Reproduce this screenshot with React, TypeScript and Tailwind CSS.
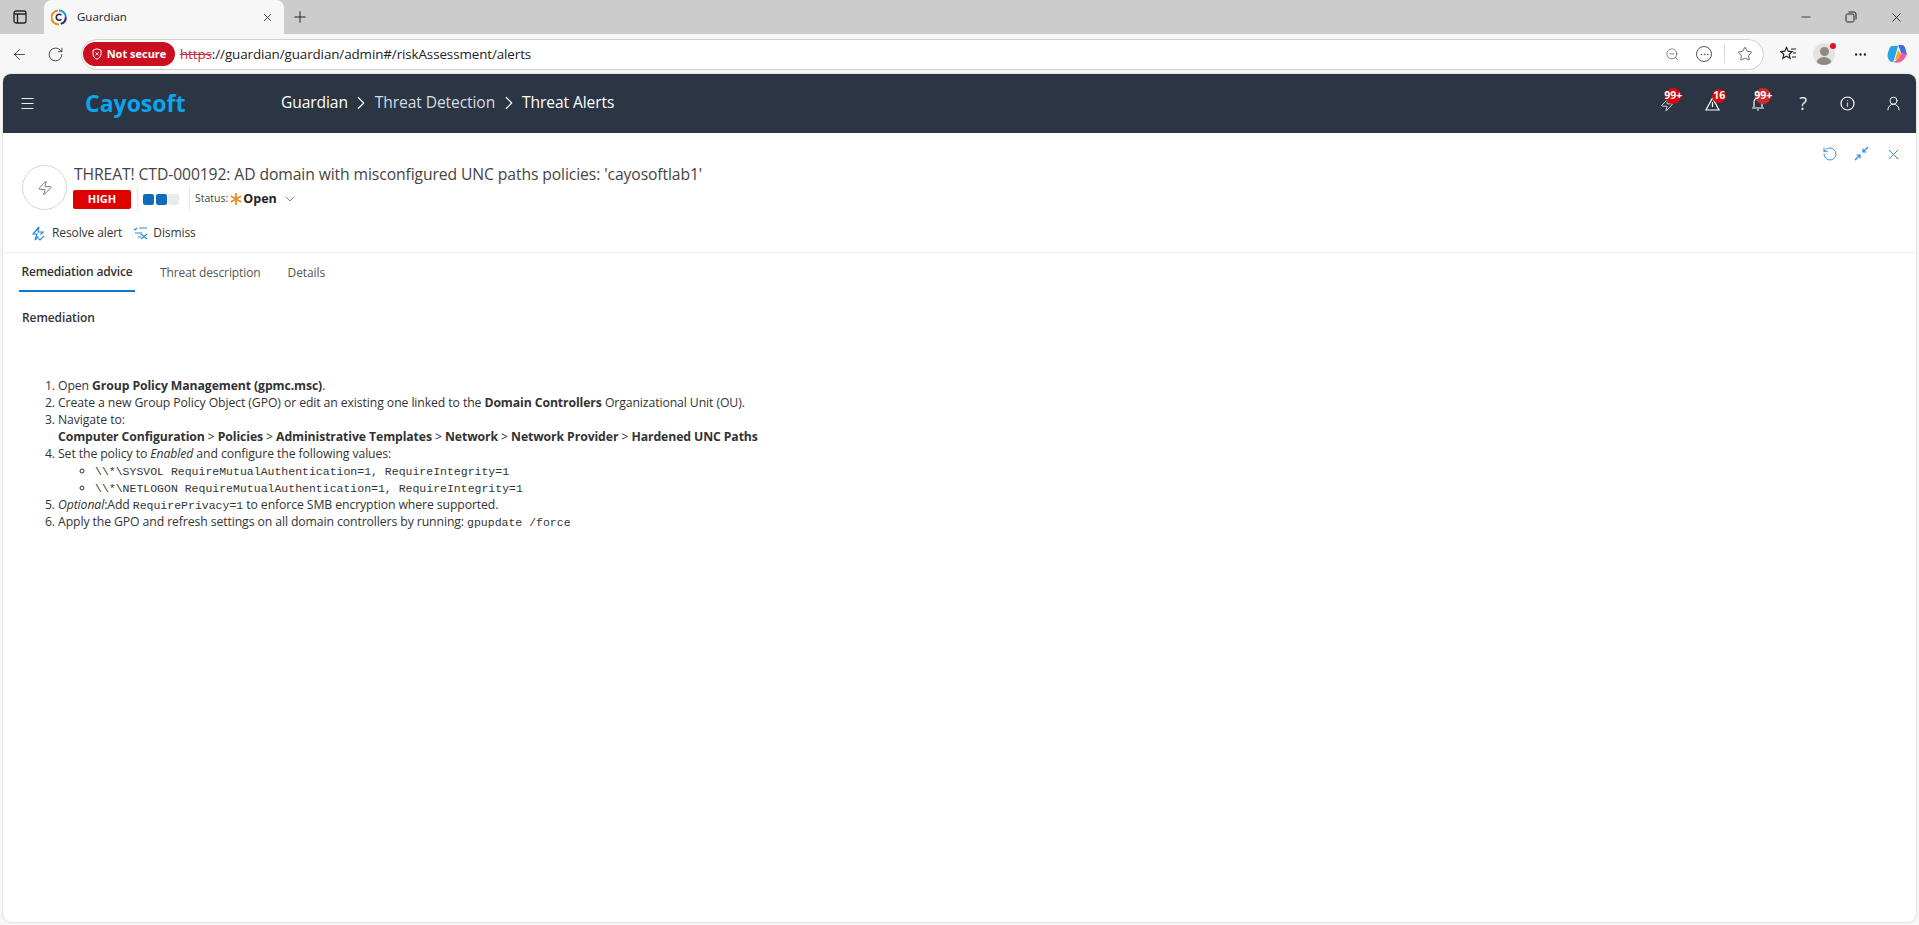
import React from "react";
import { ArrowLeft, ChevronDown, ChevronRight, Ellipsis, Menu, Minus, Plus, RotateCw, Star, UserRound, X, Zap, ZoomOut } from "lucide-react";

const badgeBase = "absolute flex items-center justify-center rounded-full text-[10.500px] font-bold text-white";

const BrowserBar = () => (
  <div className="shrink-0">
    <div className="flex h-[34px] items-stretch bg-[#cccccc]">
      <div className="flex w-[44px] items-center justify-center pr-[4px]">
        <svg width="14" height="14" viewBox="0 0 14 14" fill="none" stroke="#222" strokeWidth="1.3">
          <rect x="1" y="1" width="12" height="12" rx="2" />
          <path d="M1 4h12M4.500 4v9" />
        </svg>
      </div>
      <div className="flex w-[240px] items-center rounded-t-[8px] bg-[#f7f7f7] pl-[7px] pr-[10px]">
        <svg width="16" height="17" viewBox="0 0 16 17" fill="none">
          <path d="M8 1.500a6.800 6.800 0 0 1 6.800 6.800" stroke="#1d9bd8" strokeWidth="2" />
          <path d="M14.800 8.300a6.800 6.800 0 0 1-5 6.600" stroke="#232a55" strokeWidth="2" />
          <path d="M8 15.500a7 7 0 0 1-1-14" stroke="#ef8a1d" strokeWidth="2" />
          <path d="M10.400 6.200a3 3 0 1 0 0 4.200" stroke="#232a55" strokeWidth="1.600" />
        </svg>
        <span className="ml-[10px] flex-1 font-['Open_Sans',sans-serif] text-[11.500px] text-[#222]">Guardian</span>
        <X size={13} strokeWidth={1.5} className="text-[#222]" />
      </div>
      <div className="flex w-[32px] items-center justify-center">
        <Plus size={18} strokeWidth={1.3} className="text-[#222]" />
      </div>
      <div className="flex-1" />
      <div className="flex items-center gap-[32px] pr-[15px] text-[#222]">
        <Minus size={14} strokeWidth={1.4} />
        <svg width="12" height="12" viewBox="0 0 12 12" fill="none" stroke="#222" strokeWidth="1">
          <rect x="1" y="3" width="8" height="8" rx="1.500" />
          <path d="M3.500 1h5.500a2 2 0 0 1 2 2v5.500" />
        </svg>
        <X size={15} strokeWidth={1.4} />
      </div>
    </div>
    <div className="flex h-[40px] items-center bg-[#f7f7f7]">
      <div className="flex w-[81px] items-center pl-[11px] text-[#333]">
        <ArrowLeft size={17} strokeWidth={1.2} />
        <RotateCw size={17} strokeWidth={1.2} className="ml-[19px]" />
      </div>
      <div className="flex h-[31px] w-[1683px] items-center rounded-full border border-[#cfcfcf] bg-white pl-[1px] pr-[10px]">
        <div className="flex h-[24px] w-[92px] items-center justify-center gap-[5px] rounded-full bg-[#c90f20] font-['Open_Sans',sans-serif] text-[11px] font-bold text-white">
          <svg width="10" height="12" viewBox="0 0 10 12" fill="none" stroke="#fff" strokeWidth="1">
            <path d="M5 .8 9 2.200v3.600c0 2.600-1.700 4.300-4 5.400C2.700 10.100 1 8.400 1 5.800V2.200Z" />
            <path d="m3.500 4.300 3 3m0-3-3 3" />
          </svg>
          Not secure
        </div>
        <div className="ml-[5px] flex-1 font-['Open_Sans',sans-serif] text-[13.400px] tracking-[-0.1px] text-[#222]">
          <span className="text-[#c5283d] line-through">https</span>://guardian/guardian/admin#/riskAssessment/alerts
        </div>
        <ZoomOut size={15} strokeWidth={1.1} className="text-[#555]" />
        <div className="ml-[16px] flex h-[16px] w-[16px] items-center justify-center rounded-full border border-[#555] text-[#555]">
          <Ellipsis size={11} strokeWidth={1.5} />
        </div>
        <div className="ml-[12px] h-[18px] w-px bg-[#d8d8d8]" />
        <Star size={16} strokeWidth={1.2} className="ml-[12px] text-[#444]" />
      </div>
      <svg width="17" height="16" viewBox="0 0 17 16" fill="none" stroke="#222" strokeWidth="1.2" className="ml-[16px]">
        <path d="m6.500 1.500 1.700 3.700 4 .4-3 2.700.9 4-3.600-2.100-3.600 2.100.9-4-3-2.700 4-.4Z" />
        <path d="M11 3h5M13 7h3M12 11h4" />
      </svg>
      <div className="relative ml-[16px] h-[22px] w-[22px] overflow-hidden rounded-full bg-[#e4e3e1]">
        <div className="mx-auto mt-[4px] h-[9px] w-[9px] rounded-full bg-[#8d8a86]" />
        <div className="mx-auto mt-[1px] h-[10px] w-[16px] rounded-t-full bg-[#8d8a86]" />
      </div>
      <div className="relative -top-[8px] -ml-[5px] h-[6px] w-[6px] rounded-full bg-[#e81123]" />
      <Ellipsis size={15} strokeWidth={1.8} className="ml-[17px] text-[#222]" />
      <svg width="22" height="22" viewBox="0 0 22 22" fill="none" className="ml-[18px]">
        <path d="M6 3h6L8 17c-.5 1.800-2 2.500-3.500 1.500C2 17 .5 12 2.500 8 3.300 6 4 3 6 3Z" fill="#27a4e8" />
        <path d="M12 2h4c2 0 3 2 3.500 4L21 12l-6-2-2-6Z" fill="#3f6ee6" />
        <path d="M7 19c3 1 7 1 9-1 2-1.500 4-4 5-7l-5-1-3 3c-1 2-2 5-6 6Z" fill="#ec5aa0" />
        <path d="m9 17 3-10 3 4-2 5Z" fill="#f5a623" />
      </svg>
    </div>
  </div>
);

const AppHeader = () => (
  <header className="flex h-[59px] shrink-0 items-center rounded-t-[8px] bg-[#2b3544] pb-[1px] font-['Open_Sans',sans-serif] text-white">
    <Menu size={17} strokeWidth={1.3} className="ml-[16px]" />
    <span className="ml-[49px] w-[196px] text-[23px] font-bold leading-none text-[#0ba5ec]">Cayosoft</span>
    <nav className="flex items-center text-[15.600px] tracking-[-0.1px]">
      <span>Guardian</span>
      <ChevronRight size={22} strokeWidth={1.2} className="mx-[2.500px]" />
      <span className="text-[#d5dbe3]">Threat Detection</span>
      <ChevronRight size={22} strokeWidth={1.2} className="mx-[2.500px]" />
      <span>Threat Alerts</span>
    </nav>
    <div className="flex-1" />
    <div className="flex items-center pr-[14px]">
      <div className="relative mr-[29px] h-[16px] w-[16px]">
        <Zap size={14} strokeWidth={1.3} className="mt-[3px]" />
        <span className={`${badgeBase} -top-[7px] left-[5px] h-[16px] w-[16px] bg-[#d90a0a]`}>99+</span>
      </div>
      <div className="relative mr-[30px] h-[16px] w-[16px]">
        <svg width="15" height="14" viewBox="0 0 15 14" fill="none" stroke="#fff" strokeWidth="1.2" className="mt-[2px]">
          <path d="M7.500 1 14 13H1ZM7.500 5v5" />
        </svg>
        <span className={`${badgeBase} -top-[6px] left-[7px] h-[14px] w-[14px] bg-[#d90a0a]`}>16</span>
      </div>
      <div className="relative mr-[32px] h-[16px] w-[16px]">
        <svg width="14" height="15" viewBox="0 0 14 15" fill="none" stroke="#fff" strokeWidth="1.2" className="mt-[1px]">
          <path d="M3 11V6a4 4 0 0 1 8 0v5M1 12h12M6 14h2" />
        </svg>
        <span className={`${badgeBase} -top-[7px] left-[4px] h-[16px] w-[16px] bg-[#cc2b2b]`}>99+</span>
      </div>
      <span className="text-[18px] leading-none text-[#e8eef5]">?</span>
      <svg width="15" height="15" viewBox="0 0 15 15" fill="none" stroke="#fff" strokeWidth="1.2" className="ml-[33px]">
        <circle cx="7.500" cy="7.500" r="6.500" />
        <path d="M7.500 4v.8M7.500 6.500V11" stroke="#f3c66b" />
      </svg>
      <UserRound size={17} strokeWidth={1.3} className="ml-[30px]" />
    </div>
  </header>
);

const monoClass = "font-['Liberation_Mono',monospace] text-[11.500px] leading-none tracking-normal";

const steps = (
  <ol className="list-decimal pl-[55px] font-['Open_Sans',sans-serif] text-[12.240px] leading-[17px] tracking-[-0.1px] text-[#333]">
    <li>Open <b>Group Policy Management (gpmc.msc)</b>.</li>
    <li>Create a new Group Policy Object (GPO) or edit an existing one linked to the <b>Domain Controllers</b> Organizational Unit (OU).</li>
    <li>
      Navigate to:
      <br />
      <b>Computer Configuration</b> &gt; <b>Policies</b> &gt; <b>Administrative Templates</b> &gt; <b>Network</b> &gt; <b>Network Provider</b> &gt; <b>Hardened UNC Paths</b>
    </li>
    <li>
      Set the policy to <i>Enabled</i> and configure the following values:
      <ul className="list-[circle] pl-[37px]">
        <li><code className={monoClass}>\\*\SYSVOL RequireMutualAuthentication=1, RequireIntegrity=1</code></li>
        <li><code className={monoClass}>\\*\NETLOGON RequireMutualAuthentication=1, RequireIntegrity=1</code></li>
      </ul>
    </li>
    <li><i>Optional</i>:Add <code className={monoClass}>RequirePrivacy=1</code> to enforce SMB encryption where supported.</li>
    <li>Apply the GPO and refresh settings on all domain controllers by running: <code className={monoClass}>gpupdate /force</code></li>
  </ol>
);

const AlertPanel = () => (
  <main className="flex-1 font-['Open_Sans',sans-serif]">
    <div className="flex h-[120px] border-b border-[#eeeeee]">
      <div className="flex-1">
        <div className="flex pl-[19px] pt-[30px]">
          <div className="mt-[2px] flex h-[45px] w-[45px] items-center justify-center rounded-full border border-[#d6d6d6]">
            <Zap size={16} strokeWidth={1.2} className="text-[#555]" />
          </div>
          <div className="ml-[6px]">
            <div className="pl-[1px] text-[15.700px] leading-[22px] tracking-[-0.1px] text-[#444]">THREAT! CTD-000192: AD domain with misconfigured UNC paths policies: 'cayosoftlab1'</div>
            <div className="mt-[2px] flex h-[24px] items-center">
              <span className="flex h-[19px] w-[58px] items-center justify-center rounded-[2px] bg-[#df0000] text-[11px] font-bold text-white">HIGH</span>
              <span className="ml-[6px] h-[24px] w-px bg-[#e8e8e8]" />
              <span className="ml-[5px] h-[11px] w-[11px] rounded-[2px] bg-[#0f6cbd]" />
              <span className="ml-[1.500px] h-[11px] w-[11px] rounded-[2px] bg-[#0f6cbd]" />
              <span className="ml-[1.500px] h-[11px] w-[11px] rounded-[2px] bg-[#eaeaea]" />
              <span className="ml-[10px] h-[24px] w-px bg-[#e8e8e8]" />
              <span className="ml-[5px] text-[10.500px] text-[#444]">Status:</span>
              <svg width="12" height="12" viewBox="0 0 12 12" fill="none" stroke="#f08a24" strokeWidth="1.8" className="ml-[2px]">
                <path d="M6 0v12M.8 3l10.400 6M.8 9l10.400-6" />
              </svg>
              <span className="ml-[1px] text-[12.500px] font-bold text-[#222]">Open</span>
              <ChevronDown size={16} strokeWidth={1} className="ml-[5px] text-[#555]" />
            </div>
          </div>
        </div>
        <div className="mt-[13px] flex items-center pl-[28px] text-[12px] tracking-[-0.1px] text-[#333]">
          <svg width="14" height="15" viewBox="0 0 14 15" fill="none" stroke="#2b88d8" strokeWidth="1.2">
            <path d="M8 1 2 8h4l-2 6 3.500-3.500M8 1 7 6h5l-2.500 2.500M7.500 12.500l1.500 1.500 4-4" />
          </svg>
          <span className="ml-[7px]">Resolve alert</span>
          <svg width="15" height="14" viewBox="0 0 15 14" fill="none" stroke="#2b88d8" strokeWidth="1.1" className="ml-[11px]">
            <path d="M1 3l1 1 2-2M6 2h8M2 7h7M5 11h3M8 8l6 5M14 8l-6 5" />
          </svg>
          <span className="ml-[5px]">Dismiss</span>
        </div>
      </div>
      <div className="flex items-start gap-[16px] pr-[14px] pt-[13px] text-[#2b88d8]">
        <RotateCw size={16} strokeWidth={1.4} className="-scale-x-100" />
        <svg width="15" height="15" viewBox="0 0 15 15" fill="none" stroke="#2b88d8" strokeWidth="1.2">
          <path d="M14 1 9 6M9 2.500V6h3.500M1 14l5-5M2.500 9H6v3.500" />
        </svg>
        <X size={17} strokeWidth={1.3} />
      </div>
    </div>
    <div className="flex h-[39px] pl-[16px] text-[12px] tracking-[-0.1px] text-[#555]">
      <div className="flex w-[116px] items-center justify-center border-b-2 border-[#0f78d4] font-semibold tracking-[-0.15px] text-[#333]">Remediation advice</div>
      <div className="ml-[25px] flex items-center">Threat description</div>
      <div className="ml-[27px] flex items-center">Details</div>
    </div>
    <h2 className="ml-[19px] mt-[17px] text-[12px] font-semibold leading-[17px] tracking-[-0.1px] text-[#333]">Remediation</h2>
    <div className="mt-[51px]">{steps}</div>
  </main>
);

export default function App() {
  return (
    <div className="flex h-[925px] w-full flex-col overflow-hidden bg-[#f7f7f7]">
      <BrowserBar />
      <div className="mx-[3px] mb-[3px] flex flex-1 flex-col rounded-[8px] bg-white shadow-[0_0_2px_rgba(0,0,0,0.25)]">
        <AppHeader />
        <AlertPanel />
      </div>
    </div>
  );
}
